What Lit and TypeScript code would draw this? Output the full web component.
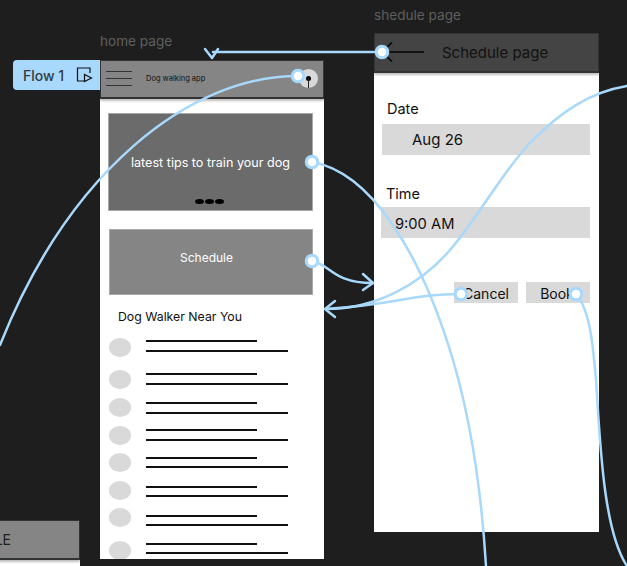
import { LitElement, html, css, svg } from "lit";
import { customElement } from "lit/decorators.js";

// mt: gap above the row; off: where the text lines start; gap: space between the two lines.
const rows = [
  { mt: 0, off: 2, gap: 8 },
  { mt: 13, off: 3, gap: 8 },
  { mt: 9, off: 4, gap: 8 },
  { mt: 9, off: 3, gap: 8 },
  { mt: 8, off: 4, gap: 7 },
  { mt: 9, off: 5, gap: 7 },
  { mt: 8, off: 7, gap: 7 },
  { mt: 14, off: 2, gap: 7 },
];

@customElement("app-root")
export class AppRoot extends LitElement {
  static styles = css`
    :host {
      display: block;
      width: 627px;
      height: 566px;
      font-family: Inter, "Liberation Sans", sans-serif;
    }
    .canvas {
      position: relative;
      width: 627px;
      height: 566px;
      overflow: hidden;
      background: #1e1e1e;
    }
    .label {
      position: absolute;
      font-size: 13.6px;
      line-height: 17px;
      color: #5e5e5e;
      white-space: nowrap;
    }
    .home-label { left: 100px; top: 33px; }
    .sched-label { left: 374px; top: 7px; }
    .flow {
      position: absolute;
      left: 13px;
      top: 60px;
      width: 87px;
      height: 30px;
      box-sizing: border-box;
      padding-left: 10px;
      display: flex;
      align-items: center;
      gap: 12px;
      background: #a8d8fb;
      border-radius: 4px 0 0 4px;
      color: #333a41;
      font-size: 14px;
      font-weight: 500;
    }
    .flow svg { display: block; flex: none; }
    .frame {
      position: absolute;
      width: 224px;
      height: 499px;
      background: #fff;
      display: flex;
      flex-direction: column;
      overflow: hidden;
    }
    .home { left: 100px; top: 60px; }
    .sched { left: 374px; top: 33px; width: 225px; }
    .left-frame {
      left: -100px;
      top: 520px;
      width: 180px;
      height: 60px;
    }
    .bar {
      flex: none;
      box-sizing: border-box;
      height: 40px;
      display: flex;
      align-items: center;
      border: 1px solid #333;
      border-bottom: 2px solid #333;
      box-shadow: 0 2px 2px rgba(0, 0, 0, 0.25);
      background: #858585;
    }
    .left-frame .bar { justify-content: flex-end; padding-right: 68px; font-size: 14px; color: #1e1e1e; }
    .home .bar { padding: 0 5px 1px 5px; height: 39px; }
    .burger { display: flex; flex-direction: column; gap: 6px; width: 26px; flex: none; }
    .burger i { display: block; height: 1px; background: #333; }
    .app-name { margin-left: 14px; font-size: 7.5px; color: #111; flex: 1; }
    .avatar {
      position: relative;
      width: 19px;
      height: 19px;
      border-radius: 50%;
      background: #d9d9d9;
      flex: none;
    }
    .avatar::before {
      content: "";
      position: absolute;
      left: 7px;
      top: 7px;
      width: 5px;
      height: 5px;
      border-radius: 50%;
      background: #000;
    }
    .avatar::after {
      content: "";
      position: absolute;
      left: 9px;
      top: 9px;
      width: 1px;
      height: 10px;
      background: #222;
    }
    .home-body { padding: 14px 11px 0 8px; display: flex; flex-direction: column; }
    .tips {
      position: relative;
      height: 98px;
      box-sizing: border-box;
      background: #6b6b6b;
      border: 1px solid #a9a9a9;
      color: #fff;
      font-size: 12.6px;
      text-align: center;
      padding-top: 41px;
      line-height: 16px;
    }
    .dots {
      position: absolute;
      left: 86px;
      bottom: 6px;
      display: flex;
      gap: 1px;
    }
    .dots i { display: block; width: 9px; height: 5px; border-radius: 50%; background: #000; }
    .schedule {
      height: 66px;
      margin: 18px 0 0 1px;
      box-sizing: border-box;
      background: #858585;
      border: 1px solid #a9a9a9;
      color: #fff;
      font-size: 12px;
      text-align: center;
      padding: 20px 9px 0 0;
      line-height: 16px;
    }
    .near { margin: 14px 0 0 10px; font-size: 12.3px; line-height: 16px; color: #111; }
    .list { margin: 13px 0 0 1px; display: flex; flex-direction: column; }
    .row { display: flex; gap: 15px; flex: none; height: 19px; }
    .row b { display: block; flex: none; width: 22px; height: 19px; border-radius: 50%; background: #d9d9d9; }
    .lines { display: flex; flex-direction: column; }
    .lines i { display: block; height: 2px; background: #111; flex: none; }
    .lines i:first-child { width: 111px; }
    .lines i:last-child { width: 142px; }
    .sched .bar { background: #444; height: 40px; padding-left: 67px; font-size: 15px; color: #111; }
    .sched-body { padding: 0 9px 0 8px; display: flex; flex-direction: column; }
    .f-label { font-size: 14.5px; line-height: 18px; color: #111; }
    .f-date { margin: 27px 0 0 5px; }
    .f-time { margin: 30px 0 0 4px; }
    .field {
      height: 31px;
      display: flex;
      align-items: center;
      box-sizing: border-box;
      background: #d9d9d9;
      font-size: 15px;
      color: #111;
    }
    .date-f { padding-left: 30px; margin-top: 6px; }
    .time-f { padding: 2px 0 0 14px; margin: 4px 0 0 -1px; font-size: 14.7px; }
    .btns { margin-top: 44px; display: flex; justify-content: flex-end; gap: 8px; }
    .btn {
      width: 64px;
      height: 21px;
      padding-top: 2px;
      box-sizing: border-box;
      display: flex;
      align-items: center;
      justify-content: center;
      background: #d9d9d9;
      font-size: 14px;
      color: #111;
    }
    .btn.book { padding-right: 2px; }
    .wires { position: absolute; left: 0; top: 0; pointer-events: none; }
    .wires .w { fill: none; stroke: #a8d8fb; stroke-width: 2.5; stroke-linecap: round; stroke-linejoin: round; }
    .wires .n { fill: #fff; stroke: #a8d8fb; stroke-width: 3; }
    .back { position: absolute; left: 380px; top: 40px; }
  `;

  private wires() {
    const paths = [
      "M382 52 L213 52",
      "M205 49 L212 58 L218 49",
      "M298 76 C 190 76 70 170 0 345",
      "M312 162 C 370 172 420 250 453 360 C 472 425 482 500 486 566",
      "M312 261 C 330 264 332 283 373 283",
      "M363 274 L373 283 L363 290",
      "M461 294 C 410 294 400 304 326 309",
      "M335 301 L325 309 L335 317",
      "M627 86 C 590 92 560 112 530 143 C 500 175 480 215 450 250 C 420 285 375 309 326 309",
      "M576 294 C 590 310 593 345 596 380 C 600 440 603 530 627 566",
    ];
    const nodes = [
      [382, 52],
      [298, 76],
      [312, 162],
      [312, 261],
      [461, 294],
      [576, 294],
    ];
    return svg`${paths.map((d) => svg`<path class="w" d=${d}></path>`)}
      ${nodes.map(([x, y]) => svg`<circle class="n" cx=${x} cy=${y} r="5.8"></circle>`)}`;
  }

  render() {
    return html`
      <div class="canvas">
        <div class="label home-label">home page</div>
        <div class="label sched-label">shedule page</div>

        <div class="frame left-frame"><div class="bar">LE</div></div>

        <div class="flow">
          <span>Flow 1</span>
          <svg width="17" height="16" viewBox="0 0 17 16" fill="none" stroke="#111" stroke-width="1.2">
            <path d="M8 14H1.5V1H14V6"></path>
            <path d="M8.5 7.5V14.5L15.5 11Z"></path>
          </svg>
        </div>

        <div class="frame home">
          <div class="bar">
            <div class="burger"><i></i><i></i><i></i></div>
            <div class="app-name">Dog walking app</div>
            <div class="avatar"></div>
          </div>
          <div class="home-body">
            <div class="tips">
              latest tips to train your dog
              <div class="dots"><i></i><i></i><i></i></div>
            </div>
            <div class="schedule">Schedule</div>
            <div class="near">Dog Walker Near You</div>
            <div class="list">
              ${rows.map(
                (r) => html`<div class="row" style="margin-top:${r.mt}px">
                  <b></b>
                  <div class="lines" style="padding-top:${r.off}px;gap:${r.gap}px"><i></i><i></i></div>
                </div>`
              )}
            </div>
          </div>
        </div>

        <div class="frame sched">
          <div class="bar">Schedule page</div>
          <div class="sched-body">
            <div class="f-label f-date">Date</div>
            <div class="field date-f">Aug 26</div>
            <div class="f-label f-time">Time</div>
            <div class="field time-f">9:00 AM</div>
            <div class="btns">
              <div class="btn">Cancel</div>
              <div class="btn book">Book</div>
            </div>
          </div>
        </div>

        <svg class="back" width="46" height="24" viewBox="0 0 46 24" fill="none" stroke="#000" stroke-width="1.6">
          <path d="M2 12H44"></path>
          <path d="M12 2.5L2 12L12 21.5"></path>
        </svg>

        <svg class="wires" width="627" height="566" viewBox="0 0 627 566">${this.wires()}</svg>
      </div>
    `;
  }
}
